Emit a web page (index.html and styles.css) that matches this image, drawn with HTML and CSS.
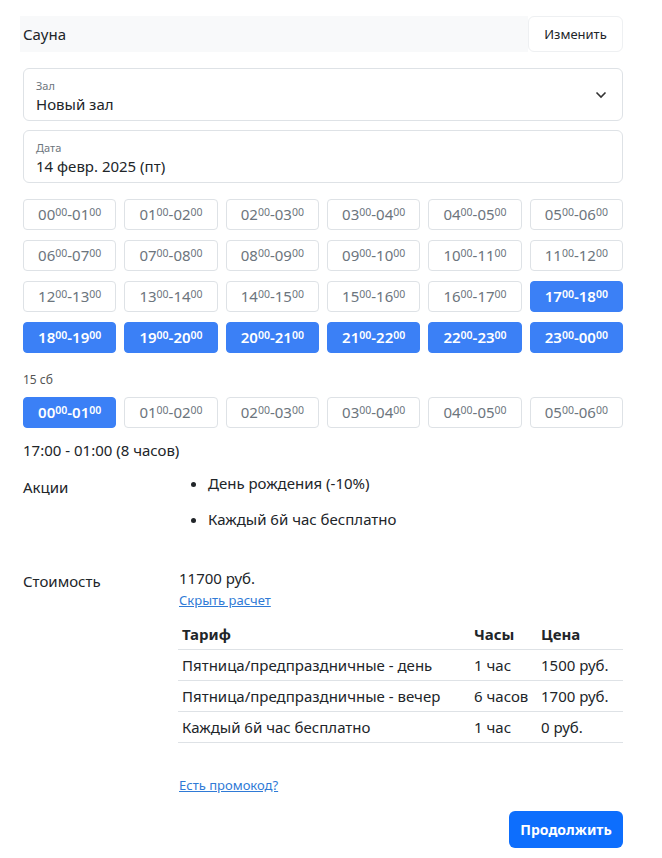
FILE: index.html
```html
<!DOCTYPE html>
<html lang="ru">

<head>
    <meta charset="UTF-8">
    <meta name="viewport" content="width=device-width, initial-scale=1.0">
    <title>Бронирование</title>
    <link rel="stylesheet" href="styles.css">
</head>

<body>
    <div class="booking">
        <div class="service-row">
            <div class="service-name">Сауна</div>
            <button class="btn-change" type="button">Изменить</button>
        </div>

        <div class="field field-select">
            <div class="field-label">Зал</div>
            <div class="field-value">Новый зал</div>
            <svg class="chevron" width="12" height="8" viewBox="0 0 12 8">
                <path d="M1.5 1.5 L6 6 L10.5 1.5" fill="none" stroke="#333" stroke-width="1.6" />
            </svg>
        </div>

        <div class="field">
            <div class="field-label">Дата</div>
            <div class="field-value">14 февр. 2025 (пт)</div>
        </div>

        <div class="slots">
            <div class="slot">00<sup>00</sup>-01<sup>00</sup></div>
            <div class="slot">01<sup>00</sup>-02<sup>00</sup></div>
            <div class="slot">02<sup>00</sup>-03<sup>00</sup></div>
            <div class="slot">03<sup>00</sup>-04<sup>00</sup></div>
            <div class="slot">04<sup>00</sup>-05<sup>00</sup></div>
            <div class="slot">05<sup>00</sup>-06<sup>00</sup></div>
            <div class="slot">06<sup>00</sup>-07<sup>00</sup></div>
            <div class="slot">07<sup>00</sup>-08<sup>00</sup></div>
            <div class="slot">08<sup>00</sup>-09<sup>00</sup></div>
            <div class="slot">09<sup>00</sup>-10<sup>00</sup></div>
            <div class="slot">10<sup>00</sup>-11<sup>00</sup></div>
            <div class="slot">11<sup>00</sup>-12<sup>00</sup></div>
            <div class="slot">12<sup>00</sup>-13<sup>00</sup></div>
            <div class="slot">13<sup>00</sup>-14<sup>00</sup></div>
            <div class="slot">14<sup>00</sup>-15<sup>00</sup></div>
            <div class="slot">15<sup>00</sup>-16<sup>00</sup></div>
            <div class="slot">16<sup>00</sup>-17<sup>00</sup></div>
            <div class="slot active">17<sup>00</sup>-18<sup>00</sup></div>
            <div class="slot active">18<sup>00</sup>-19<sup>00</sup></div>
            <div class="slot active">19<sup>00</sup>-20<sup>00</sup></div>
            <div class="slot active">20<sup>00</sup>-21<sup>00</sup></div>
            <div class="slot active">21<sup>00</sup>-22<sup>00</sup></div>
            <div class="slot active">22<sup>00</sup>-23<sup>00</sup></div>
            <div class="slot active">23<sup>00</sup>-00<sup>00</sup></div>
        </div>

        <div class="day-label">15 сб</div>

        <div class="slots">
            <div class="slot active">00<sup>00</sup>-01<sup>00</sup></div>
            <div class="slot">01<sup>00</sup>-02<sup>00</sup></div>
            <div class="slot">02<sup>00</sup>-03<sup>00</sup></div>
            <div class="slot">03<sup>00</sup>-04<sup>00</sup></div>
            <div class="slot">04<sup>00</sup>-05<sup>00</sup></div>
            <div class="slot">05<sup>00</sup>-06<sup>00</sup></div>
        </div>

        <div class="summary">17:00 - 01:00 (8 часов)</div>

        <div class="info-row">
            <div class="info-label">Акции</div>
            <ul class="promo-list">
                <li>День рождения (-10%)</li>
                <li>Каждый 6й час бесплатно</li>
            </ul>
        </div>

        <div class="info-row cost-row">
            <div class="info-label">Стоимость</div>
            <div class="cost">
                <div class="total">11700 руб.</div>
                <a href="#" class="link">Скрыть расчет</a>
                <table class="calc">
                    <thead>
                        <tr>
                            <th>Тариф</th>
                            <th>Часы</th>
                            <th>Цена</th>
                        </tr>
                    </thead>
                    <tbody>
                        <tr>
                            <td>Пятница/предпраздничные - день</td>
                            <td>1 час</td>
                            <td>1500 руб.</td>
                        </tr>
                        <tr>
                            <td>Пятница/предпраздничные - вечер</td>
                            <td>6 часов</td>
                            <td>1700 руб.</td>
                        </tr>
                        <tr>
                            <td>Каждый 6й час бесплатно</td>
                            <td>1 час</td>
                            <td>0 руб.</td>
                        </tr>
                    </tbody>
                </table>
                <a href="#" class="link promo-link">Есть промокод?</a>
            </div>
        </div>

        <div class="actions">
            <button class="btn-primary" type="button">Продолжить</button>
        </div>
    </div>
</body>

</html>
```

FILE: styles.css
```css
body {
    margin: 0;
    padding: 0;
    background-color: #fff;
    font-family: 'Noto Sans', 'Open Sans', sans-serif;
    font-size: 15px;
    color: #212529;
}

.booking {
    width: 600px;
    padding: 16px 0 0 23px;
}

.service-row {
    display: flex;
    height: 36px;
}

.service-name {
    flex: 1;
    display: flex;
    align-items: center;
    background-color: #f8f9fa;
    margin-left: -3px;
    padding-left: 3px;
}

.btn-change {
    width: 95px;
    background-color: #fff;
    border: 1px solid #eef0f2;
    border-radius: 6px;
    font-family: inherit;
    font-size: 13px;
    color: #212529;
}

.field {
    position: relative;
    margin-top: 9px;
    height: 53px;
    box-sizing: border-box;
    border: 1px solid #dee2e6;
    border-radius: 6px;
    padding: 9px 12px 0;
}

.field-select {
    margin-top: 16px;
}

.field-label {
    font-size: 11px;
    color: #6c757d;
    line-height: 16px;
}

.field-value {
    line-height: 20px;
}

.chevron {
    position: absolute;
    right: 15px;
    top: 22px;
}

.slots {
    display: grid;
    grid-template-columns: repeat(6, 1fr);
    gap: 10px 8px;
    margin-top: 16px;
}

.slot {
    height: 31px;
    box-sizing: border-box;
    border: 1px solid #dee2e6;
    border-radius: 4px;
    display: flex;
    align-items: center;
    justify-content: center;
    color: #6c757d;
    font-size: 15px;
    line-height: 1;
}

.slot sup {
    font-size: 10.5px;
    position: relative;
    top: -2px;
}

.slot.active {
    background-color: #3b80f6;
    border-color: #3b80f6;
    color: #fff;
    font-weight: 600;
}

.day-label {
    margin-top: 18px;
    font-size: 12px;
    color: #555;
}

.day-label + .slots {
    margin-top: 9px;
}

.summary {
    margin-top: 12px;
}

.info-row {
    display: flex;
    margin-top: 12px;
}

.info-label {
    width: 155px;
    flex-shrink: 0;
    padding-top: 5px;
}

.promo-list {
    margin: 0;
    padding-left: 30px;
}

.promo-list li {
    line-height: 22px;
    margin-bottom: 14px;
}

.cost-row {
    margin-top: 21px;
}

.cost-row .info-label {
    padding-top: 6px;
}

.cost {
    flex: 1;
    padding-top: 2px;
}

.total {
    line-height: 22px;
    padding-left: 1px;
}

.link {
    display: inline-block;
    margin-top: 2px;
    font-size: 13px;
    color: #2f7ad6;
    padding-left: 1px;
}

.calc {
    width: 100%;
    border-collapse: collapse;
    margin-top: 10px;
}

.calc th {
    text-align: left;
    font-weight: 700;
    height: 30px;
    padding: 0 4px;
    border-bottom: 1px solid #dee2e6;
}

.calc td {
    height: 30px;
    padding: 0 4px;
    border-bottom: 1px solid #dee2e6;
}

.calc th:nth-child(2),
.calc td:nth-child(2) {
    width: 59px;
}

.calc th:nth-child(3),
.calc td:nth-child(3) {
    width: 78px;
}

.promo-link {
    margin-top: 33px;
}

.actions {
    display: flex;
    justify-content: flex-end;
    margin-top: 17px;
}

.btn-primary {
    width: 114px;
    height: 37px;
    background-color: #0d6efd;
    color: #fff;
    border: none;
    border-radius: 6px;
    font-family: inherit;
    font-size: 14px;
    font-weight: 700;
}
```
